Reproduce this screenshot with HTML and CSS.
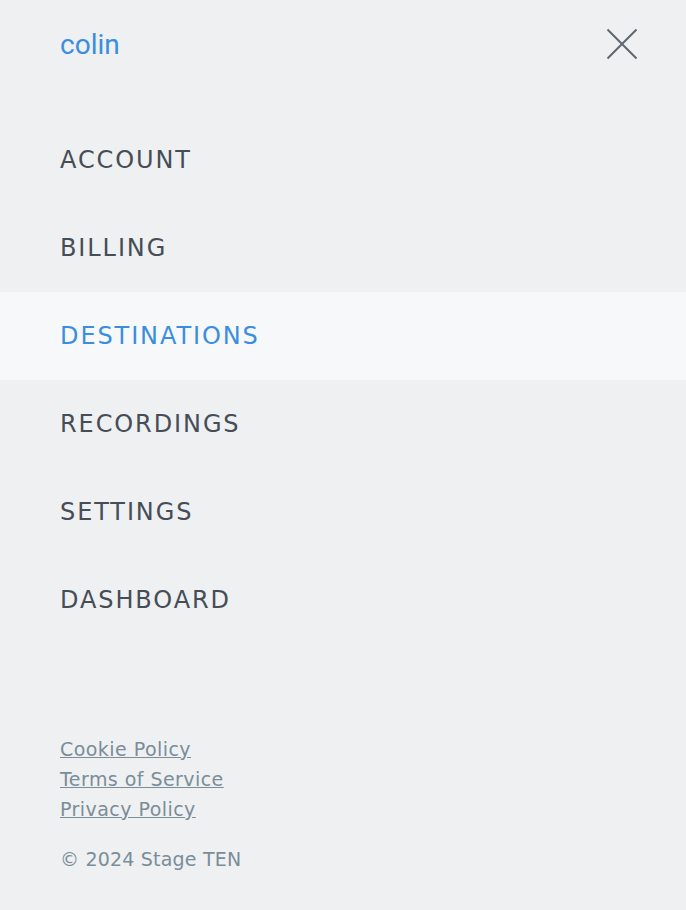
FILE: index.html
```html
<!DOCTYPE html>
<html>
<head>
<meta charset="utf-8">
<link rel="stylesheet" href="styles.css">
</head>
<body>
<div class="panel">
  <header class="top">
    <span class="user">colin</span>
    <button class="close" aria-label="Close">
      <svg width="32" height="32" viewBox="0 0 32 32"><path d="M1.5 1.5 L30.5 30.5 M30.5 1.5 L1.5 30.5" stroke="#5f6770" stroke-width="2" fill="none"/></svg>
    </button>
  </header>
  <nav class="menu">
    <a class="item">ACCOUNT</a>
    <a class="item">BILLING</a>
    <a class="item active">DESTINATIONS</a>
    <a class="item">RECORDINGS</a>
    <a class="item">SETTINGS</a>
    <a class="item">DASHBOARD</a>
  </nav>
  <footer class="foot">
    <a class="link">Cookie Policy</a>
    <a class="link">Terms of Service</a>
    <a class="link">Privacy Policy</a>
    <p class="copy">© 2024 Stage TEN</p>
  </footer>
</div>
</body>
</html>
```
FILE: styles.css
```css
html, body {
  margin: 0;
  padding: 0;
  background: #eff0f2;
}
.panel {
  width: 686px;
  height: 910px;
  display: flex;
  flex-direction: column;
}
.top {
  height: 88px;
  display: flex;
  align-items: center;
  justify-content: space-between;
  padding: 0 48px 0 60px;
}
.user {
  font-family: Roboto, sans-serif;
  font-size: 28px;
  color: #3a8ee0;
}
.close {
  border: 0;
  background: none;
  padding: 0;
  width: 32px;
  height: 32px;
  display: flex;
}
.menu {
  margin-top: 28px;
  display: flex;
  flex-direction: column;
}
.item {
  height: 88px;
  display: flex;
  align-items: center;
  padding-left: 60px;
  font-family: "DejaVu Sans", sans-serif;
  font-size: 24px;
  letter-spacing: 1.9px;
  color: #464d56;
}
.item.active {
  background: #f7f8fa;
  color: #3a8ee0;
}
.foot {
  margin-top: 90px;
  padding-left: 60px;
  display: flex;
  flex-direction: column;
  align-items: flex-start;
}
.link {
  font-family: "DejaVu Sans", sans-serif;
  font-size: 19px;
  letter-spacing: 0.45px;
  line-height: 30px;
  color: #7a8d99;
  text-decoration: underline;
}
.copy {
  margin: 20px 0 0;
  font-family: "DejaVu Sans", sans-serif;
  font-size: 19px;
  letter-spacing: 0.2px;
  line-height: 30px;
  color: #7a8d99;
}
```
